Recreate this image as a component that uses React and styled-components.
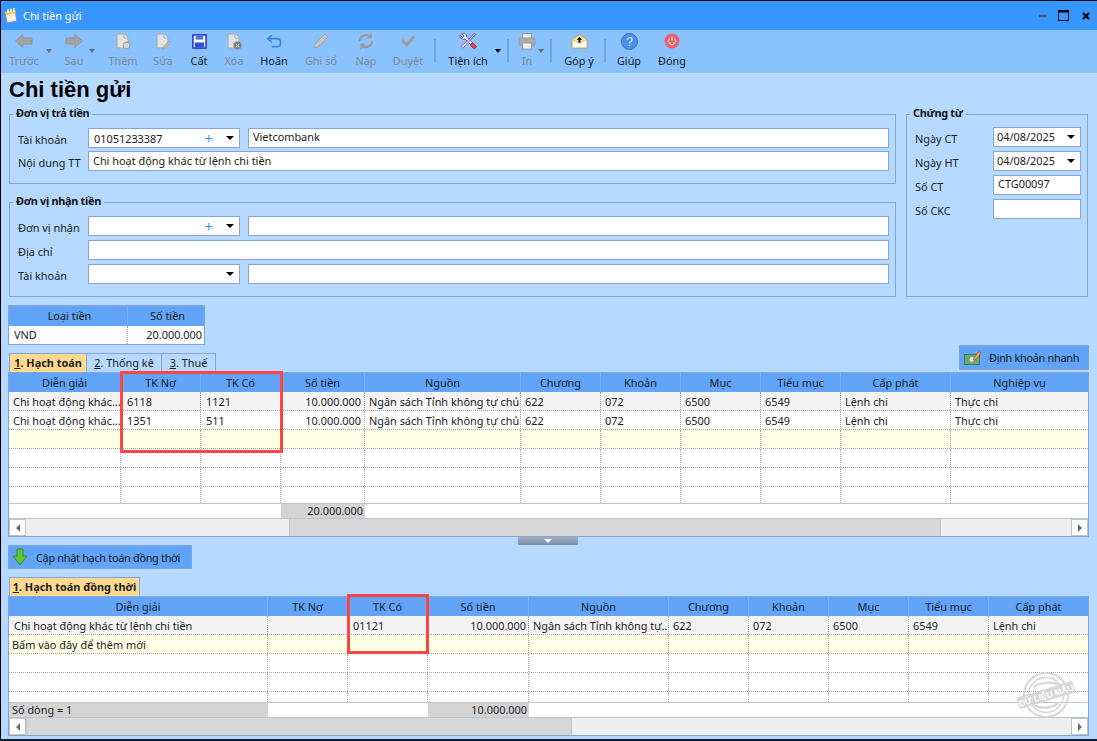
import React from 'react'
import styled, { createGlobalStyle } from 'styled-components'

const GlobalStyle = createGlobalStyle`
  html, body {
    margin: 0;
    padding: 0;
    background: #b5d9ff;
  }
  * {
    box-sizing: border-box;
  }
  body {
    font-family: "Noto Sans", "Liberation Sans", Arial, sans-serif;
    font-size: 10.9px;
    color: #1c1c1c;
  }
`

const Window = styled.div`
  width: 1097px;
  height: 741px;
  display: flex;
  flex-direction: column;
  border-top: 1px solid #000;
  border-left: 1px solid #000;
  border-bottom: 2px solid #15202c;
  background: #b5d9ff;
  overflow: hidden;
  position: relative;
`

const TitleBar = styled.div`
  height: 29px;
  flex: none;
  display: flex;
  align-items: center;
  background: #3796ff;
  padding: 0 7px 0 2px;
`
const TitleText = styled.span`
  color: #fff;
  margin-left: 4px;
  flex: 1;
`
const WinControls = styled.div`
  display: flex;
  align-items: center;
`
const WinIcon = styled.svg`
  margin-left: ${p => p.$ml}px;
`

const Toolbar = styled.div`
  height: 43px;
  flex: none;
  display: flex;
  padding-left: 2px;
  background: #8ac2ff;
`
const Tool = styled.div`
  position: relative;
  flex: none;
  width: ${p => p.$w}px;
  display: flex;
  flex-direction: column;
  align-items: center;
  padding-top: 1px;
  color: ${p => (p.$off ? '#7d8894' : '#101820')};
`
const ToolIcon = styled.div`
  height: 20px;
  display: flex;
  align-items: center;
  justify-content: center;
`
const ToolLabel = styled.span`
  margin-top: 2px;
  line-height: 15px;
  white-space: nowrap;
`
const Caret = styled.i`
  position: absolute;
  top: 19px;
  left: ${p => p.$x}px;
  border-left: 3.5px solid transparent;
  border-right: 3.5px solid transparent;
  border-top: 4px solid ${p => (p.$off ? '#5f6f80' : '#000')};
`
const ToolSep = styled.div`
  flex: none;
  width: 2px;
  height: 23px;
  margin: 9px ${p => p.$r}px 0 ${p => p.$l}px;
  background: #6fa5dc;
`

const Content = styled.div`
  flex: 1;
  padding: 0 0 0 7px;
  display: flex;
  flex-direction: column;
`
const PageTitle = styled.h1`
  margin: 0 0 0 1px;
  height: 34px;
  font-family: "Liberation Sans", Arial, sans-serif;
  font-size: 22px;
  line-height: 33px;
  font-weight: 700;
  color: #000;
`
const TopForm = styled.div`
  display: flex;
  gap: 10px;
  margin-left: 1px;
  width: 1079px;
`
const LeftForms = styled.div`
  width: 887px;
  display: flex;
  flex-direction: column;
  gap: 11px;
`
const Group = styled.fieldset`
  margin: 0;
  min-width: 0;
  border: 1px solid #86a4d8;
  padding: ${p => p.$top || 7}px 6px 0 8px;
  height: ${p => p.$h}px;
  width: ${p => (p.$wd ? p.$wd + 'px' : 'auto')};
`
const GroupTitle = styled.legend`
  padding: 0 3px;
  margin-left: -5px;
  height: 14px;
  font-weight: 700;
  font-size: 10.9px;
  letter-spacing: -0.3px;
  line-height: 12px;
  color: #111;
`
const FormRows = styled.div`
  display: grid;
  grid-template-columns: 62px 152px 1fr;
  column-gap: 8px;
  row-gap: ${p => p.$gap}px;
  align-items: center;
`
const VoucherRows = styled.div`
  display: grid;
  grid-template-columns: 78px 88px;
  row-gap: 4px;
  align-items: center;
`
const FieldLabel = styled.label`
  white-space: nowrap;
  padding-top: 2px;
`
const TextBox = styled.div`
  height: 20px;
  background: #fff;
  border: 1px solid #86a4d8;
  padding-left: ${p => (p.$date ? 3 : 4)}px;
  line-height: ${p => (p.$wide ? 18 : 16)}px;
  grid-column: ${p => (p.$wide ? '2 / -1' : 'auto')};
  white-space: nowrap;
`
const Combo = styled(TextBox)`
  display: flex;
  align-items: center;
  padding-right: 5px;
  padding-left: ${p => (p.$date ? 3 : 5)}px;
`
const ComboValue = styled.span`
  flex: 1;
  padding-top: ${p => (p.$low ? 2 : 0)}px;
`
const Plus = styled.span`
  color: #3b9bea;
  font-size: 15px;
  line-height: 16px;
  margin-right: 13px;
`
const Arrow = styled.i`
  border-left: 4px solid transparent;
  border-right: 4px solid transparent;
  border-top: 4px solid #000;
`

const MoneyTable = styled.div`
  margin: 8px 0 0 0;
  width: 197px;
  height: 40px;
  border: 1px solid #86a4d8;
  flex: none;
`
const MoneyRow = styled.div`
  display: grid;
  grid-template-columns: 118px 77px;
  height: ${p => p.$h}px;
  background: ${p => p.$bg};
  line-height: ${p => p.$h}px;
`
const MoneyCell = styled.div`
  padding: 0 2px 0 5px;
  text-align: ${p => p.$align || 'left'};
  border-left: ${p => (p.$line ? `1px ${p.$line}` : '0')};
`

const TabRow = styled.div`
  height: ${p => p.$h}px;
  flex: none;
  display: flex;
  align-items: flex-end;
  padding-left: 1px;
  width: 1081px;
`
const Tab = styled.div`
  width: ${p => p.$w}px;
  height: 19px;
  line-height: 18px;
  text-align: center;
  white-space: nowrap;
  background: ${p => (p.$active ? '#ffd98f' : '#b5d9ff')};
  font-weight: ${p => (p.$active ? 700 : 400)};
  border: 1px solid #86a4d8;
  border-bottom: 0;
  border-left-width: ${p => (p.$first ? 1 : 0)}px;
  u {
    text-decoration: underline;
  }
`
const ActionButton = styled.div`
  display: flex;
  align-items: center;
  flex: none;
  width: ${p => p.$w}px;
  height: ${p => p.$h}px;
  background: #62a4f8;
  border: 1px solid #7ea3d8;
  color: #101820;
  letter-spacing: -0.3px;
  padding-left: ${p => p.$pad}px;
  gap: ${p => p.$gap}px;
  white-space: nowrap;
`
const PushRight = styled.div`
  margin-left: auto;
  align-self: flex-start;
`

const GridBox = styled.div`
  position: relative;
  width: 1081px;
  flex: none;
  border: 1px solid #86a4d8;
  background: #fff;
`
const GridHead = styled.div`
  display: grid;
  grid-template-columns: ${p => p.$cols};
  height: 19px;
  background: #62a4f8;
`
const HeadCell = styled.div`
  text-align: center;
  line-height: 20px;
  color: #14202c;
  border-right: 1px solid #7fb2ef;
  &:last-child {
    border-right: 0;
  }
`
const GridBody = styled.div`
  height: ${p => p.$h}px;
  overflow: hidden;
`
const GridRow = styled.div`
  display: grid;
  grid-template-columns: ${p => p.$cols};
  height: 19px;
  background: ${p => p.$bg || '#fff'};
  border-bottom: 1px dotted #a8a8a8;
`
const Cell = styled.div`
  padding: 1px ${p => p.$rpad}px 0 ${p => p.$pad}px;
  line-height: 17px;
  text-align: ${p => (p.$right ? 'right' : 'left')};
  white-space: nowrap;
  overflow: hidden;
  border-right: 1px dotted #a8a8a8;
  &:last-child {
    border-right: 0;
  }
`
const GridFoot = styled.div`
  display: grid;
  grid-template-columns: ${p => p.$cols};
  height: 16px;
  border-top: 1px solid #b5c6d8;
  border-bottom: 1px solid #b5c6d8;
`
const FootCell = styled.div`
  background: ${p => (p.$gray ? '#d4d4d4' : '#fff')};
  text-align: ${p => (p.$right ? 'right' : 'left')};
  padding: 0 2px 0 3px;
  line-height: 14px;
`
const ScrollBar = styled.div`
  height: 17px;
  display: flex;
  background: #efefef;
`
const ScrollEnd = styled.div`
  width: 17px;
  flex: none;
  background: #fff;
  border: 1px solid #c2c2c2;
  display: flex;
  align-items: center;
  justify-content: center;
`
const ScrollGap = styled.div`
  flex: ${p => (p.$w ? `0 0 ${p.$w}px` : 1)};
`
const ScrollThumb = styled.div`
  flex: 0 0 ${p => p.$w}px;
  background: #d8d8d8;
  border-left: 1px solid #c2c2c2;
  border-right: 1px solid #c2c2c2;
`
const Tri = styled.i`
  border-top: 4px solid transparent;
  border-bottom: 4px solid transparent;
  ${p => (p.$left ? 'border-right: 4px solid #6d6d6d;' : 'border-left: 4px solid #6d6d6d;')}
`
const Splitter = styled.div`
  height: 8px;
  flex: none;
  width: 1080px;
  display: flex;
  justify-content: center;
`
const SplitHandle = styled.div`
  width: 60px;
  height: 8px;
  background: linear-gradient(#a2afc4, #7b8ca6);
  display: flex;
  justify-content: center;
  padding-top: 2px;
`
const SplitArrow = styled.i`
  border-left: 4px solid transparent;
  border-right: 4px solid transparent;
  border-top: 4px solid #fff;
  height: 0;
`
const RedBox = styled.div`
  position: absolute;
  left: ${p => p.$x}px;
  top: ${p => p.$y}px;
  width: ${p => p.$w}px;
  height: ${p => p.$h}px;
  border: 3px solid #ff4444;
  pointer-events: none;
`
const Stamp = styled.svg`
  position: absolute;
  right: 12px;
  bottom: 16px;
  opacity: 0.9;
`

/* --- icons --- */
const AppIcon = () => (
  <svg width="16" height="18" viewBox="0 0 16 18">
    <path d="M2 5 L12 3 L14 14 L4 16 Z" fill="#f4f0d8" stroke="#8d82c8" />
    <path d="M2 5 L12 3 L12.6 6 L2.6 8 Z" fill="#f0c83c" />
    <path d="M5 2 v4 M8 1.5 v4 M11 1 v4" stroke="#fff" strokeWidth="1.4" />
  </svg>
)
const ArrowIcon = ({ flip }) => (
  <svg width="18" height="14" viewBox="0 0 18 14">
    <path
      d="M0.5 7 L8 0.5 V4 H17 V10 H8 V13.5 Z"
      fill="#a3a3a3"
      stroke="#949494"
      transform={flip ? 'matrix(-1 0 0 1 18 0)' : undefined}
    />
  </svg>
)
const DocIcon = ({ badge }) => (
  <svg width="16" height="17" viewBox="0 0 16 17">
    <path d="M2 1 H9 L13 5 V15 H2 Z" fill="#e2e2e2" stroke="#a8a8a8" />
    <path d="M9 1 V5 H13" fill="#fff" stroke="#a8a8a8" />
    {badge === 'plus' && <circle cx="11.5" cy="12.5" r="3.4" fill="#d6d6d6" stroke="#9a9a9a" />}
    {badge === 'pen' && <path d="M8 14.5 L14 8 L15.5 9.5 L9.5 16 L7.5 16.5 Z" fill="#bdbdbd" stroke="#8f8f8f" strokeWidth="0.7" />}
    {badge === 'del' && (
      <g>
        <circle cx="11.5" cy="12.5" r="4" fill="#808080" />
        <path d="M9.8 10.8 L13.2 14.2 M13.2 10.8 L9.8 14.2" stroke="#fff" />
      </g>
    )}
  </svg>
)
const SaveIcon = () => (
  <svg width="15" height="15" viewBox="0 0 16 16">
    <rect x="1" y="1" width="14" height="14" fill="#fff" stroke="#1f2fd0" strokeWidth="1.6" />
    <rect x="4" y="1.5" width="8" height="4.5" fill="#4f78d8" />
    <rect x="3" y="9" width="10" height="5.5" fill="#3450d0" />
  </svg>
)
const UndoIcon = () => (
  <svg width="17" height="15" viewBox="0 0 18 16" fill="none" stroke="#2f86e0" strokeWidth="1.8">
    <path d="M6 1.5 L2 5 L6 8.5" />
    <path d="M2 5 H11 C14 5 15.5 7 15.5 9.2 C15.5 11.6 14 13.5 11 13.5 H6" />
  </svg>
)
const PenIcon = () => (
  <svg width="18" height="18" viewBox="0 0 18 18">
    <path d="M2 16 L3 12 L13 2 L16 5 L6 15 Z" fill="#c4c4c4" stroke="#a0a0a0" />
  </svg>
)
const ReloadIcon = () => (
  <svg width="18" height="18" viewBox="0 0 18 18" fill="none" stroke="#9a9a9a" strokeWidth="2.4">
    <path d="M3 9 A6 6 0 0 1 13 4.5" />
    <path d="M15 9 A6 6 0 0 1 5 13.5" />
    <path d="M14.5 1 V6 H9.8 Z" fill="#9a9a9a" strokeWidth="0.5" />
    <path d="M3.5 17 V12 H8.2 Z" fill="#9a9a9a" strokeWidth="0.5" />
  </svg>
)
const CheckIcon = () => (
  <svg width="16" height="14" viewBox="0 0 18 16" fill="none" stroke="#9c9c9c" strokeWidth="3.4">
    <path d="M2 7 L7.5 12.5 L16 2.5" />
  </svg>
)
const ToolsIcon = () => (
  <svg width="18" height="18" viewBox="0 0 18 18">
    <path d="M2.5 1.5 L5 4 L4.5 5 L3.5 5.5 L1 3 C0.5 6 3 8 6 7 L12 13 L14 11 L7.5 5 C8 2.5 6 0.5 2.5 1.5 Z" fill="#f2eefc" stroke="#6a4fb0" strokeWidth="0.9" />
    <path d="M15.5 1 L16.8 2.3 L11 8.5 L9.7 7.2 Z" fill="#d8ccf2" stroke="#6a4fb0" strokeWidth="0.9" />
    <path d="M9 8.5 L10 9.5 L4.5 15.5 C3.5 16.7 1.5 15 2.6 13.8 Z" fill="#f2eefc" stroke="#6a4fb0" strokeWidth="0.9" />
    <path d="M11.2 13 L13.5 10.5 L17.2 14 C17.6 15.4 15.8 17.2 14.5 16.6 Z" fill="#e0403c" stroke="#a02020" strokeWidth="0.7" />
  </svg>
)
const PrinterIcon = () => (
  <svg width="18" height="17" viewBox="0 0 18 17">
    <rect x="4.5" y="0.5" width="9" height="5" fill="#f0f0f0" stroke="#9a9a9a" />
    <rect x="1" y="5" width="16" height="7" rx="1" fill="#adadad" stroke="#9a9a9a" />
    <rect x="4.5" y="10" width="9" height="6" fill="#f0f0f0" stroke="#9a9a9a" />
  </svg>
)
const MailIcon = () => (
  <svg width="17" height="15" viewBox="0 0 18 16">
    <path d="M1 6 L9 1 L17 6 V15 H1 Z" fill="#fff" stroke="#c49a3c" />
    <path d="M1 6 L9 1 L17 6 L9 10 Z" fill="#ffe9a8" stroke="#c49a3c" strokeWidth="0.6" />
    <path d="M9 3 L11.8 6.2 H10 V9 H8 V6.2 H6.2 Z" fill="#000" />
  </svg>
)
const HelpIcon = () => (
  <svg width="17" height="17" viewBox="0 0 17 17">
    <circle cx="8.5" cy="8.5" r="8" fill="#4a90ea" stroke="#2f74d0" />
    <text x="8.5" y="13" fontSize="12" fill="#e8f2ff" textAnchor="middle" fontFamily="Liberation Sans">?</text>
  </svg>
)
const PowerIcon = () => (
  <svg width="16" height="16" viewBox="0 0 17 17">
    <circle cx="8.5" cy="8.5" r="8" fill="#f0606a" />
    <path d="M5.9 6 A3.7 3.7 0 1 0 11.1 6" fill="none" stroke="#fff" strokeWidth="1" />
    <path d="M8.5 4 V8.5" stroke="#fff" strokeWidth="1" />
  </svg>
)
const GreenDown = () => (
  <svg width="16" height="18" viewBox="0 0 16 18">
    <path d="M5 1 H11 V8 H15 L8 17 L1 8 H5 Z" fill="#62c43a" stroke="#2f8a1e" />
  </svg>
)
const QuickIcon = () => (
  <svg width="18" height="16" viewBox="0 0 18 16">
    <rect x="0.5" y="4.5" width="15" height="10" fill="#6aa878" stroke="#3a7a50" />
    <circle cx="8" cy="9.5" r="2.4" fill="#d4ecd8" />
    <path d="M10 8 L15 1.5 L17 3 L12 9.5 L9.5 10 Z" fill="#f0b040" stroke="#c04030" strokeWidth="0.7" />
  </svg>
)

const tools = [
  { label: 'Trước', w: 42, off: true, icon: <ArrowIcon />, caret: 43 },
  { label: 'Sau', w: 58, off: true, icon: <ArrowIcon flip />, caret: 44 },
  { label: 'Thêm', w: 40, off: true, icon: <DocIcon badge="plus" /> },
  { label: 'Sửa', w: 40, off: true, icon: <DocIcon badge="pen" /> },
  { label: 'Cất', w: 32, icon: <SaveIcon /> },
  { label: 'Xóa', w: 38, off: true, icon: <DocIcon badge="del" /> },
  { label: 'Hoãn', w: 42, icon: <UndoIcon /> },
  { label: 'Ghi sổ', w: 52, off: true, icon: <PenIcon /> },
  { label: 'Nạp', w: 38, off: true, icon: <ReloadIcon /> },
  { label: 'Duyệt', w: 46, off: true, icon: <CheckIcon /> },
  { sep: [3, 0] },
  { label: 'Tiện ích', w: 64, icon: <ToolsIcon />, caret: 59 },
  { sep: [7, 2] },
  { label: 'In', w: 32, off: true, icon: <PrinterIcon />, caret: 27 },
  { sep: [7, 2] },
  { label: 'Góp ý', w: 50, icon: <MailIcon /> },
  { sep: [0, 0] },
  { label: 'Giúp', w: 46, icon: <HelpIcon /> },
  { label: 'Đóng', w: 40, icon: <PowerIcon /> },
]

const cols1 = '112px 80px 80px 84px 156px 80px 80px 80px 80px 110px 137px'
const cols2 = '259px 80px 80px 101px 140px 80px 80px 80px 80px 99px'
const head1 = ['Diễn giải', 'TK Nợ', 'TK Có', 'Số tiền', 'Nguồn', 'Chương', 'Khoản', 'Mục', 'Tiểu mục', 'Cấp phát', 'Nghiệp vụ']
const head2 = ['Diễn giải', 'TK Nợ', 'TK Có', 'Số tiền', 'Nguồn', 'Chương', 'Khoản', 'Mục', 'Tiểu mục', 'Cấp phát']

const rows1 = [
  { bg: '#f4f4f4', cells: ['Chi hoạt động khác...', '6118', '1121', '10.000.000', 'Ngân sách Tỉnh không tự chủ', '622', '072', '6500', '6549', 'Lệnh chi', 'Thực chi'] },
  { bg: '#fff', cells: ['Chi hoạt động khác...', '1351', '511', '10.000.000', 'Ngân sách Tỉnh không tự chủ', '622', '072', '6500', '6549', 'Lệnh chi', 'Thực chi'] },
  { bg: '#ffffe6', cells: Array(11).fill('') },
  { bg: '#fff', cells: Array(11).fill('') },
  { bg: '#fff', cells: Array(11).fill('') },
  { bg: '#fff', cells: Array(11).fill('') },
]
const rows2 = [
  { bg: '#f4f4f4', cells: ['Chi hoạt động khác từ lệnh chi tiền', '', '01121', '10.000.000', 'Ngân sách Tỉnh không tự...', '622', '072', '6500', '6549', 'Lệnh chi'] },
  { bg: '#ffffe6', first: 3, cells: ['Bấm vào đây để thêm mới', '', '', '', '', '', '', '', '', ''] },
  { bg: '#fff', cells: Array(10).fill('') },
  { bg: '#fff', cells: Array(10).fill('') },
  { bg: '#fff', cells: Array(10).fill('') },
]

const DataGrid = ({ cols, head, rows, bodyH, foot, pads, moneyRight, thumbBefore, thumbW, children }) => (
  <GridBox>
    <GridHead $cols={cols}>
      {head.map(h => <HeadCell key={h}>{h}</HeadCell>)}
    </GridHead>
    <GridBody $h={bodyH}>
      {rows.map((row, i) => (
        <GridRow key={i} $cols={cols} $bg={row.bg}>
          {row.cells.map((c, j) => (
            <Cell
              key={j}
              $right={j === 3}
              $rpad={j === 3 ? moneyRight : 2}
              $pad={j === 0 && row.first ? row.first : pads[j] ?? 4}
            >
              {c}
            </Cell>
          ))}
        </GridRow>
      ))}
    </GridBody>
    <GridFoot $cols={foot.cols}>
      {foot.cells.map((c, i) => (
        <FootCell key={i} $gray={c.gray} $right={c.right}>{c.text}</FootCell>
      ))}
    </GridFoot>
    <ScrollBar>
      <ScrollEnd><Tri $left /></ScrollEnd>
      {thumbBefore > 0 && <ScrollGap $w={thumbBefore} />}
      <ScrollThumb $w={thumbW} />
      <ScrollGap />
      <ScrollEnd><Tri /></ScrollEnd>
    </ScrollBar>
    {children}
  </GridBox>
)

const App = () => (
  <Window>
    <GlobalStyle />
    <TitleBar>
      <AppIcon />
      <TitleText>Chi tiền gửi</TitleText>
      <WinControls>
        <WinIcon $ml={0} width="8" height="3" viewBox="0 0 8 3"><rect width="8" height="2" y="1" fill="#555" /></WinIcon>
        <WinIcon $ml={11} width="11" height="11" viewBox="0 0 11 11"><rect x="0.5" y="0.5" width="10" height="10" fill="none" stroke="#000" /><rect width="11" height="2.5" fill="#000" /></WinIcon>
        <WinIcon $ml={13} width="8" height="8" viewBox="0 0 8 8"><path d="M1 1 L7 7 M7 1 L1 7" stroke="#000" strokeWidth="2" /></WinIcon>
      </WinControls>
    </TitleBar>

    <Toolbar>
      {tools.map((t, i) => t.sep ? (
        <ToolSep key={i} $l={t.sep[0]} $r={t.sep[1]} />
      ) : (
        <Tool key={t.label} $w={t.w} $off={t.off}>
          <ToolIcon>{t.icon}</ToolIcon>
          <ToolLabel>{t.label}</ToolLabel>
          {t.caret && <Caret $x={t.caret} $off={t.off} />}
        </Tool>
      ))}
    </Toolbar>

    <Content>
      <PageTitle>Chi tiền gửi</PageTitle>
      <TopForm>
        <LeftForms>
          <Group $h={77}>
            <GroupTitle>Đơn vị trả tiền</GroupTitle>
            <FormRows $gap={3}>
              <FieldLabel>Tài khoản</FieldLabel>
              <Combo><ComboValue $low>01051233387</ComboValue><Plus>+</Plus><Arrow /></Combo>
              <TextBox>Vietcombank</TextBox>
              <FieldLabel>Nội dung TT</FieldLabel>
              <TextBox $wide>Chi hoạt động khác từ lệnh chi tiền</TextBox>
            </FormRows>
          </Group>
          <Group $h={102}>
            <GroupTitle>Đơn vị nhận tiền</GroupTitle>
            <FormRows $gap={4}>
              <FieldLabel>Đơn vị nhận</FieldLabel>
              <Combo><ComboValue /><Plus>+</Plus><Arrow /></Combo>
              <TextBox />
              <FieldLabel>Địa chỉ</FieldLabel>
              <TextBox $wide />
              <FieldLabel>Tài khoản</FieldLabel>
              <Combo><ComboValue /><Arrow /></Combo>
              <TextBox />
            </FormRows>
          </Group>
        </LeftForms>
        <Group $h={190} $wd={182} $top={6}>
          <GroupTitle>Chứng từ</GroupTitle>
          <VoucherRows>
            <FieldLabel>Ngày CT</FieldLabel>
            <Combo $date><ComboValue>04/08/2025</ComboValue><Arrow /></Combo>
            <FieldLabel>Ngày HT</FieldLabel>
            <Combo $date><ComboValue>04/08/2025</ComboValue><Arrow /></Combo>
            <FieldLabel>Số CT</FieldLabel>
            <TextBox>CTG00097</TextBox>
            <FieldLabel>Số CKC</FieldLabel>
            <TextBox />
          </VoucherRows>
        </Group>
      </TopForm>

      <MoneyTable>
        <MoneyRow $h={20} $bg="#62a4f8">
          <MoneyCell $align="center">Loại tiền</MoneyCell>
          <MoneyCell $align="center" $line="solid #7fb2ef">Số tiền</MoneyCell>
        </MoneyRow>
        <MoneyRow $h={18} $bg="#fff">
          <MoneyCell>VND</MoneyCell>
          <MoneyCell $align="right" $line="dotted #a8a8a8">20.000.000</MoneyCell>
        </MoneyRow>
      </MoneyTable>

      <TabRow $h={27}>
        <Tab $w={78} $active $first><u>1</u>. Hạch toán</Tab>
        <Tab $w={75}><u>2</u>. Thống kê</Tab>
        <Tab $w={54}><u>3</u>. Thuế</Tab>
        <PushRight>
          <ActionButton $w={130} $h={25} $pad={4} $gap={7}><QuickIcon />Định khoản nhanh</ActionButton>
        </PushRight>
      </TabRow>

      <DataGrid
        cols={cols1}
        head={head1}
        rows={rows1}
        bodyH={111}
        pads={[4, 6, 5]}
        moneyRight={3}
        thumbBefore={263}
        thumbW={652}
        foot={{
          cols: '272px 84px 1fr',
          cells: [{ text: '' }, { text: '20.000.000', gray: true, right: true }, { text: '' }],
        }}
      >
        <RedBox $x={111} $y={-2} $w={163} $h={82} />
      </DataGrid>

      <Splitter>
        <SplitHandle><SplitArrow /></SplitHandle>
      </Splitter>

      <ActionButton $w={184} $h={24} $pad={3} $gap={8}><GreenDown />Cập nhật hạch toán đồng thời</ActionButton>

      <TabRow $h={27}>
        <Tab $w={131} $active $first><u>1</u>. Hạch toán đồng thời</Tab>
      </TabRow>

      <DataGrid
        cols={cols2}
        head={head2}
        rows={rows2}
        bodyH={86}
        pads={[5, 4, 5]}
        moneyRight={2}
        thumbBefore={0}
        thumbW={546}
        foot={{
          cols: '259px 160px 101px 1fr',
          cells: [{ text: 'Số dòng = 1', gray: true }, { text: '' }, { text: '10.000.000', gray: true, right: true }, { text: '' }],
        }}
      >
        <RedBox $x={338} $y={-3} $w={82} $h={60} />
        <Stamp width="60" height="48" viewBox="0 0 60 48">
          <g fill="none" stroke="#d4d4d4">
            <circle cx="30" cy="24" r="22" strokeWidth="2" />
            <circle cx="30" cy="24" r="17.5" strokeWidth="1.5" />
            <path d="M18 16 C24 11 36 11 42 13 M18 34 C24 38 36 38 42 32" strokeWidth="2.5" />
          </g>
          <g transform="rotate(-17 30 24)">
            <rect x="1" y="18" width="58" height="12" fill="#d4d4d4" />
            <text x="30" y="27.5" fontSize="8.5" fontWeight="700" fill="#fff" textAnchor="middle" fontFamily="Liberation Sans">DỮ LIỆU MẪU</text>
          </g>
        </Stamp>
      </DataGrid>
    </Content>
  </Window>
)

export default App
